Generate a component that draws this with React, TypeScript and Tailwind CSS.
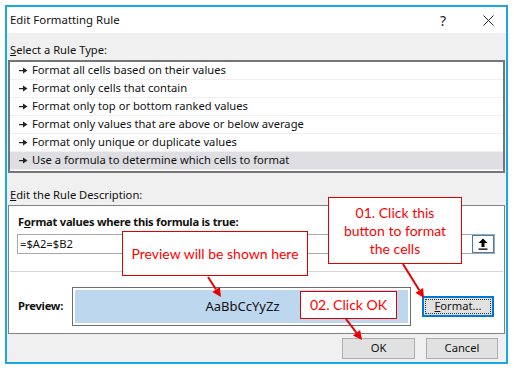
import React from "react";

const rules = [
  "Format all cells based on their values",
  "Format only cells that contain",
  "Format only top or bottom ranked values",
  "Format only values that are above or below average",
  "Format only unique or duplicate values",
  "Use a formula to determine which cells to format",
];

function Bullet() {
  return (
    <svg width="9" height="7" viewBox="0 0 9 7" className="shrink-0">
      <rect x="0" y="3" width="5" height="1.2" fill="#222" />
      <path d="M4 0.5 L8.5 3.5 L4 6.5 Z" fill="#222" />
    </svg>
  );
}

function Arrow({ x1, y1, x2, y2 }: { x1: number; y1: number; x2: number; y2: number }) {
  const a = Math.atan2(y2 - y1, x2 - x1);
  const len = 9;
  const w = 4.5;
  const bx = x2 - Math.cos(a) * len;
  const by = y2 - Math.sin(a) * len;
  const px = -Math.sin(a) * w;
  const py = Math.cos(a) * w;
  return (
    <g>
      <line x1={x1} y1={y1} x2={bx} y2={by} stroke="#e60000" strokeWidth="2" />
      <path d={`M${x2} ${y2} L${bx + px} ${by + py} L${bx - px} ${by - py} Z`} fill="#e60000" />
    </g>
  );
}

function Note({ className, children }: { className: string; children: React.ReactNode }) {
  return (
    <div
      className={`absolute flex items-center justify-center bg-white border-[1.5px] border-[#e00000] text-[#ff0000] text-[14px] leading-[18px] text-center ${className}`}
      style={{ fontFamily: "Lato, 'Noto Sans', sans-serif" }}
    >
      {children}
    </div>
  );
}

export default function App() {
  return (
    <div
      className="relative w-[514px] h-[371px] bg-white p-[5px] text-[11.2px] text-[#111]"
      style={{ fontFamily: "'Noto Sans', 'Open Sans', sans-serif" }}
    >
      <div className="w-[503px] h-[359px] border-2 border-[#1aa6e8] flex flex-col">
        {/* title bar */}
        <div className="h-[26px] bg-white flex items-center pl-[3px] pr-[12px]">
          <span className="flex-1 text-[11.4px]">Edit Formatting Rule</span>
          <span className="text-[14px] mr-[37px] text-[#222]">?</span>
          <svg width="11" height="11" viewBox="0 0 11 11">
            <path d="M0.5 0.5 L10.5 10.5 M10.5 0.5 L0.5 10.5" stroke="#222" strokeWidth="1" />
          </svg>
        </div>

        {/* body */}
        <div className="flex-1 bg-[#f0f0f0] flex flex-col px-[1px]">
          <div className="h-[27px] flex items-end pl-[2px] pb-[1px]">
            <span>
              <span className="underline">S</span>elect a Rule Type:
            </span>
          </div>
          <div className="h-[113px] border-2 border-[#767676] bg-white flex flex-col">
            {rules.map((r, i) => (
              <div
                key={r}
                className={`h-[18px] flex items-center gap-[4px] pl-[9px] border-b border-[#f0f0f0] ${
                  i === rules.length - 1 ? "bg-[#dedee3]" : ""
                }`}
              >
                <Bullet />
                <span>{r}</span>
              </div>
            ))}
          </div>

          <div className="h-[32px] flex items-end pl-[2px] pb-[1px]">
            <span>
              <span className="underline">E</span>dit the Rule Description:
            </span>
          </div>

          <div className="h-[129px] border border-[#828282] bg-white flex flex-col">
            <div className="pl-[9px] pt-[8px] h-[28px] font-bold tracking-[-0.25px]">
              F<span className="underline">o</span>rmat values where this formula is true:
            </div>
            <div className="ml-[8px] mr-[9px] h-[20px] border border-[#a8a8a8] flex items-center">
              <span className="flex-1 pl-[2px]">=$A2=$B2</span>
              <div className="w-[22px] h-[18px] border border-[#3c7fb1] bg-white flex items-center justify-center">
                <svg width="10" height="12" viewBox="0 0 10 12">
                  <path d="M5 0.5 L9.5 5 L6.5 5 L6.5 9 L3.5 9 L3.5 5 L0.5 5 Z" fill="#000" />
                  <rect x="0.5" y="10.5" width="9" height="1.3" fill="#000" />
                </svg>
              </div>
            </div>
            <div className="mx-[1px] mt-[17px] h-px bg-[#d4d4d4]" />
            <div className="flex items-center mt-[15px]">
              <span className="pl-[9px] w-[63px] font-bold tracking-[-0.25px]">Preview:</span>
              <div className="w-[339px] h-[39px] border border-[#6d6d6d] p-[2px]">
                <div className="h-full bg-[#bdd7ee] flex items-center justify-center text-[13px] pl-[2px]">
                  AaBbCcYyZz
                </div>
              </div>
              <div className="ml-[11px] w-[72px] h-[21px] border-2 border-[#0078d7] bg-[#e1e1e1] p-[1px]">
                <div className="h-full border border-dotted border-[#333] flex items-center justify-center">
                  <span>
                    <span className="underline">F</span>ormat...
                  </span>
                </div>
              </div>
            </div>
          </div>

          <div className="flex justify-end gap-[11px] mt-[4px] pr-[7px]">
            <div className="w-[73px] h-[21px] border border-[#adadad] bg-[#e1e1e1] flex items-center justify-center">
              OK
            </div>
            <div className="w-[72px] h-[21px] border border-[#adadad] bg-[#e1e1e1] flex items-center justify-center">
              Cancel
            </div>
          </div>
        </div>
      </div>

      {/* annotations */}
      <Note className="left-[122px] top-[231px] w-[186px] h-[45px]">Preview will be shown here</Note>
      <Note className="left-[328px] top-[197px] w-[134px] h-[67px] px-[10px]">
        01. Click this button to format the cells
      </Note>
      <Note className="left-[300px] top-[291px] w-[97px] h-[28px]">02. Click OK</Note>
      <svg className="absolute left-0 top-0 pointer-events-none" width="514" height="371">
        <Arrow x1={208} y1={277} x2={221} y2={297} />
        <Arrow x1={403} y1={264} x2={424} y2={298} />
        <Arrow x1={346} y1={319} x2={362} y2={340} />
      </svg>
    </div>
  );
}
